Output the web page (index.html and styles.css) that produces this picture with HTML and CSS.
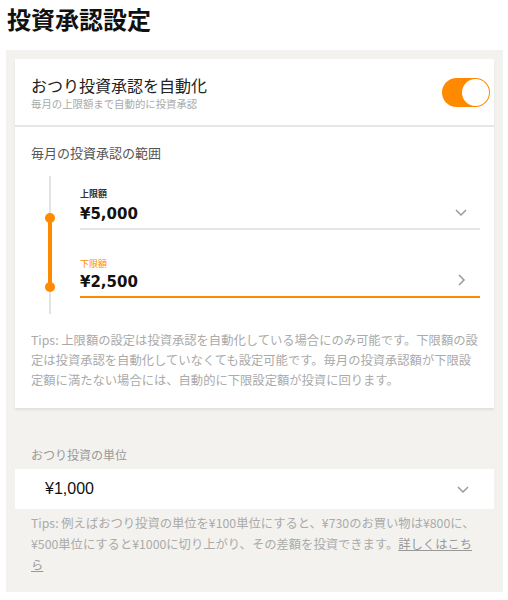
FILE: index.html
```html
<!DOCTYPE html>
<html lang="ja">
<head>
    <meta charset="UTF-8">
    <meta name="viewport" content="width=device-width, initial-scale=1.0">
    <title>投資承認設定</title>
    <link rel="stylesheet" href="styles.css">
</head>
<body>
    <h1 class="page-title">投資承認設定</h1>
    <div class="panel">
        <div class="card">
            <div class="auto-row">
                <div class="auto-text">
                    <div class="auto-title">おつり投資承認を自動化</div>
                    <div class="auto-sub">毎月の上限額まで自動的に投資承認</div>
                </div>
                <div class="toggle on"><span class="knob"></span></div>
            </div>
            <div class="range">
                <div class="range-title">毎月の投資承認の範囲</div>
                <div class="range-body">
                    <div class="track">
                        <span class="dot top"></span>
                        <span class="bar"></span>
                        <span class="dot bottom"></span>
                    </div>
                    <div class="fields">
                        <div class="field">
                            <div class="field-label">上限額</div>
                            <div class="field-value">¥5,000</div>
                            <svg class="chev" width="14" height="14" viewBox="0 0 14 14"><path d="M2 5l5 5 5-5" fill="none" stroke="#999" stroke-width="1.5"/></svg>
                        </div>
                        <div class="field active">
                            <div class="field-label">下限額</div>
                            <div class="field-value">¥2,500</div>
                            <svg class="chev" width="14" height="14" viewBox="0 0 14 14"><path d="M5 2l5 5-5 5" fill="none" stroke="#999" stroke-width="1.5"/></svg>
                        </div>
                    </div>
                </div>
                <p class="tips">Tips: 上限額の設定は投資承認を自動化している場合にのみ可能です。下限額の設定は投資承認を自動化していなくても設定可能です。毎月の投資承認額が下限設定額に満たない場合には、自動的に下限設定額が投資に回ります。</p>
            </div>
        </div>
        <div class="unit">
            <div class="unit-title">おつり投資の単位</div>
            <div class="select">
                <span>¥1,000</span>
                <svg class="chev" width="14" height="14" viewBox="0 0 14 14"><path d="M2 5l5 5 5-5" fill="none" stroke="#999" stroke-width="1.5"/></svg>
            </div>
            <p class="tips">Tips: 例えばおつり投資の単位を¥100単位にすると、¥730のお買い物は¥800に、¥500単位にすると¥1000に切り上がり、その差額を投資できます。<a href="#">詳しくはこちら</a></p>
        </div>
    </div>
</body>
</html>
```

FILE: styles.css
```css
body {
    margin: 0;
    padding: 0 5px 0 6px;
    font-family: "Noto Sans CJK JP", "Liberation Sans", sans-serif;
    color: #222;
    background: #fff;
}
.page-title {
    margin: 0;
    padding: 1px 0 0 1px;
    height: 49px;
    font-size: 24px;
    font-weight: bold;
    line-height: 36px;
    color: #111;
}
.panel {
    background: #f3f2ef;
    padding: 9px 9px 16px 9px;
}
.card {
    background: #fff;
    box-shadow: 0 2px 2px rgba(0, 0, 0, 0.08);
}
.auto-row {
    display: flex;
    align-items: center;
    justify-content: space-between;
    height: 66px;
    padding: 0 4px 0 16px;
    border-bottom: 2px solid #e6e6e6;
}
.auto-title {
    font-size: 16px;
    line-height: 24px;
    color: #222;
}
.auto-sub {
    font-size: 10.4px;
    line-height: 14px;
    color: #aaa;
}
.toggle {
    width: 48px;
    height: 29px;
    border-radius: 15px;
    background: #ff8a00;
    position: relative;
}
.toggle .knob {
    position: absolute;
    right: 1px;
    top: 1px;
    width: 27px;
    height: 27px;
    border-radius: 50%;
    background: #fff;
}
.range {
    padding: 16px 14px 18px 16px;
}
.range-title {
    font-size: 13px;
    line-height: 20px;
    color: #555;
}
.range-body {
    display: flex;
    margin-top: 13px;
}
.track {
    width: 49px;
    position: relative;
    height: 138px;
}
.track::before {
    content: "";
    position: absolute;
    left: 18px;
    top: 0;
    bottom: 0;
    width: 2px;
    background: #e2e2e2;
}
.track .bar {
    position: absolute;
    left: 17px;
    top: 42px;
    height: 69px;
    width: 4px;
    background: #ff8a00;
}
.track .dot {
    position: absolute;
    left: 14px;
    width: 10px;
    height: 10px;
    border-radius: 50%;
    background: #ff8a00;
}
.track .top { top: 37px; }
.track .bottom { top: 106px; }
.fields {
    flex: 1;
}
.field {
    position: relative;
    height: 54px;
    padding-top: 12px;
    border-bottom: 2px solid #e6e6e6;
    box-sizing: border-box;
}
.field + .field {
    margin-top: 14px;
    padding-top: 14px;
}
.field.active {
    border-bottom-color: #ff8a00;
}
.field-label {
    font-size: 9px;
    font-weight: bold;
    line-height: 12px;
    color: #333;
}
.field.active .field-label {
    color: #ff8a00;
    font-weight: normal;
}
.field-value {
    margin-top: 3px;
    font-family: "DejaVu Sans", sans-serif;
    font-size: 15px;
    font-weight: bold;
    line-height: 22px;
    color: #111;
}
.field.active .field-value {
    margin-top: 1px;
}
.field .chev {
    position: absolute;
    right: 12px;
    top: 29px;
}
.tips {
    margin: 16px 0 0 0;
    font-size: 12.3px;
    line-height: 20px;
    color: #aaa;
}
.unit {
    padding-top: 37px;
}
.unit-title {
    padding-left: 16px;
    font-size: 12px;
    line-height: 20px;
    color: #999;
}
.select {
    display: flex;
    align-items: center;
    justify-content: space-between;
    background: #fff;
    height: 40px;
    margin-top: 4px;
    padding: 0 24px 0 30px;
}
.select span {
    font-family: "Liberation Sans", sans-serif;
    font-size: 16px;
    color: #111;
}
.unit .tips {
    margin: 4px 0 0 0;
    padding: 0 14px 0 16px;
    line-height: 21px;
}
.tips a {
    color: #999;
}
```
